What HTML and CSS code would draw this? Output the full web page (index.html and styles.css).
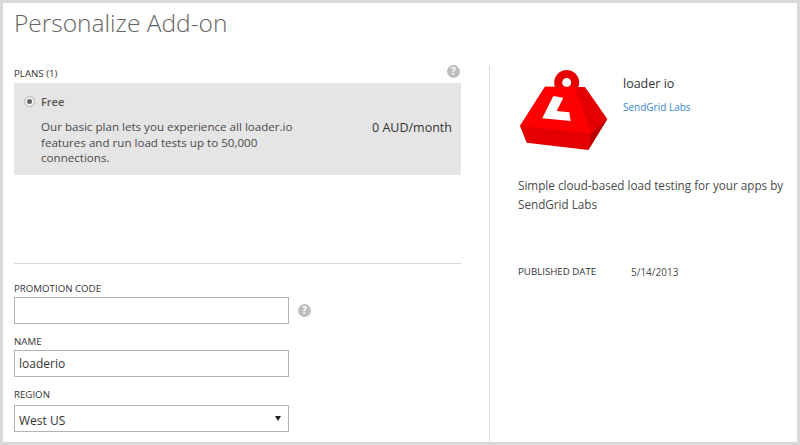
FILE: index.html
```html
<!DOCTYPE html>
<html lang="en">
<head>
<meta charset="utf-8">
<title>Personalize Add-on</title>
<link rel="stylesheet" href="styles.css">
</head>
<body>
<div class="frame">
  <h1 class="title">Personalize Add-on</h1>
  <div class="columns">
    <section class="left">
      <div class="label-row">
        <span class="label">PLANS (1)</span>
        <span class="help">?</span>
      </div>
      <div class="plan">
        <div class="plan-head">
          <span class="radio"><span class="radio-dot"></span></span>
          <span class="plan-name">Free</span>
        </div>
        <div class="plan-body">
          <p class="plan-desc">Our basic plan lets you experience all loader.io features and run load tests up to 50,000 connections.</p>
          <span class="plan-price">0 AUD/month</span>
        </div>
      </div>
      <hr class="rule">
      <div class="field first">
        <label class="label">PROMOTION CODE</label>
        <div class="input-row">
          <div class="input"></div>
          <span class="help">?</span>
        </div>
      </div>
      <div class="field">
        <label class="label">NAME</label>
        <div class="input">loaderio</div>
      </div>
      <div class="field region">
        <label class="label">REGION</label>
        <div class="input select"><span>West US</span><span class="caret"></span></div>
      </div>
    </section>
    <aside class="right">
      <div class="product">
        <svg class="logo" width="92" height="84" viewBox="518 68 92 84" aria-hidden="true">
          <path fill-rule="evenodd" fill="#e60000" d="M554.200 82.500a12.500 12.500 0 1 0 25 0a12.500 12.500 0 1 0 -25 0ZM562.200 82.500a4.500 4.500 0 1 1 9 0a4.500 4.500 0 1 1 -9 0Z"/>
          <path fill="#e40000" d="M545 86.700 L585 87 L607.300 119 L588.300 150 L526.700 142.700 L520 126 Z"/>
          <path fill="#ff0000" d="M545 86.700 L574 87 L591.700 133.300 L520 126 Z"/>
          <path fill="#b80000" d="M591.700 133.300 L607.300 119 L588.300 150 Z"/>
          <path fill="#fff" d="M553.300 96 L563.300 97.700 L556.700 111 L569.300 112.300 L570.700 121 L542.300 118.300 Z"/>
        </svg>
        <div class="product-info">
          <div class="product-name">loader io</div>
          <a class="vendor" href="#">SendGrid Labs</a>
        </div>
      </div>
      <p class="summary">Simple cloud-based load testing for your apps by SendGrid Labs</p>
      <div class="meta">
        <span class="label meta-key">PUBLISHED DATE</span>
        <span class="meta-value">5/14/2013</span>
      </div>
    </aside>
  </div>
</div>
</body>
</html>
```

FILE: styles.css
```css
* { box-sizing: border-box; }
html, body { margin: 0; padding: 0; background: #fff; }
body {
  width: 800px;
  height: 445px;
  overflow: hidden;
  font-family: "Open Sans", "Liberation Sans", sans-serif;
  color: #3a3a3a;
}
.frame {
  width: 800px;
  height: 445px;
  border: 3px solid #d9d9d9;
  padding: 0 0 0 11px;
  overflow: hidden;
}
.title {
  margin: 0;
  height: 63px;
  padding-top: 3px;
  font-size: 24.500px;
  line-height: 34px;
  font-weight: 300;
  color: #666;
}
.columns { display: flex; height: 376px; }
.left {
  width: 447px;
  flex: none;
  margin-right: 28px;
}
.right {
  flex: 1;
  min-width: 0;
  border-left: 1px solid #d9d9d9;
  padding-left: 28px;
}
.label {
  display: block;
  font-size: 9.700px;
  line-height: 14px;
  color: #333;
}
.label-row {
  display: flex;
  justify-content: space-between;
  align-items: flex-start;
  height: 17px;
  padding-top: 1px;
}
.help {
  width: 13px;
  height: 13px;
  border-radius: 50%;
  background: #bdbdbd;
  color: #fff;
  font-size: 10px;
  font-weight: 700;
  line-height: 13px;
  text-align: center;
  flex: none;
}
.label-row .help { margin: -2px 1px 0 0; }
.plan {
  height: 92px;
  background: #e5e5e5;
  padding: 9px 9px 0 9px;
}
.plan-head { display: flex; align-items: center; height: 18px; }
.radio {
  width: 11px;
  height: 11px;
  border-radius: 50%;
  border: 1px solid #b5b5b5;
  background: #f2f2f2;
  display: flex;
  align-items: center;
  justify-content: center;
  margin-right: 6px;
  margin-left: 1px;
}
.radio-dot { width: 5px; height: 5px; border-radius: 50%; background: #666; }
.plan-name { font-size: 11px; font-weight: 600; color: #555; }
.plan-body {
  display: flex;
  justify-content: space-between;
  align-items: flex-start;
  padding: 9px 0 0 18px;
}
.plan-desc {
  margin: 0;
  width: 262px;
  font-size: 11.600px;
  line-height: 15.500px;
  color: #4a4a4a;
}
.plan-price { font-size: 12.500px; line-height: 17px; color: #333; }
.rule {
  margin: 88px 0 0;
  border: 0;
  border-top: 1px solid #d9d9d9;
  height: 1px;
}
.field { margin-top: 11px; }
.field.first { margin-top: 18px; }
.field .label { margin-bottom: 1px; }
.field.region .label { margin-bottom: 3px; }
.input-row { display: flex; align-items: center; }
.input-row .help { margin-left: 9px; }
.input {
  width: 275px;
  height: 27px;
  border: 1px solid #b3b3b3;
  background: #fff;
  padding: 0 4px;
  font-size: 12px;
  line-height: 25px;
  color: #333;
}
.select {
  display: flex;
  justify-content: space-between;
  align-items: center;
  padding: 3px 7px 0 4px;
}
.caret {
  width: 0;
  height: 0;
  margin-top: -4px;
  border-left: 3px solid transparent;
  border-right: 3px solid transparent;
  border-top: 5px solid #222;
}
.product { display: flex; padding-top: 2px; }
.logo { flex: none; margin-right: 13px; }
.product-info { padding-top: 8px; }
.product-name { font-size: 12.500px; font-weight: 400; line-height: 16px; color: #333; }
.vendor {
  display: block;
  margin-top: 8px;
  font-size: 10px;
  line-height: 14px;
  color: #3a87c8;
  text-decoration: none;
}
.summary {
  margin: 24px 0 0;
  font-size: 11.700px;
  line-height: 19px;
  color: #4a4a4a;
}
.meta { display: flex; align-items: center; margin-top: 51px; }
.meta-key { width: 113px; }
.meta-value { font-size: 10px; color: #4a4a4a; }
```
